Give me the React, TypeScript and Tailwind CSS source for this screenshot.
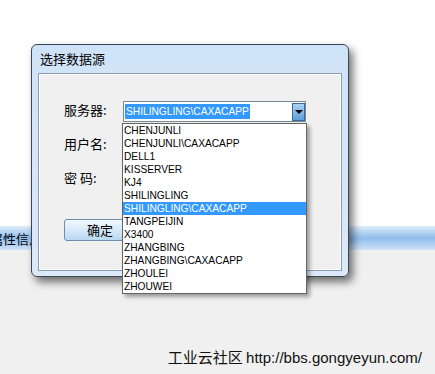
import React from 'react';

const servers = [
  'CHENJUNLI',
  'CHENJUNLI\\CAXACAPP',
  'DELL1',
  'KISSERVER',
  'KJ4',
  'SHILINGLING',
  'SHILINGLING\\CAXACAPP',
  'TANGPEIJIN',
  'X3400',
  'ZHANGBING',
  'ZHANGBING\\CAXACAPP',
  'ZHOULEI',
  'ZHOUWEI',
];

const selected = 'SHILINGLING\\CAXACAPP';

const cjk = { fontFamily: '"Noto Sans CJK SC", sans-serif' };
const latin = { fontFamily: '"Liberation Sans", Arial, sans-serif' };

export default function App() {
  return (
    <div className="relative w-[435px] h-[374px] overflow-hidden bg-[#f0f0f0]" style={latin}>
      {/* desktop behind the dialog */}
      <div className="h-[226px] bg-white" />
      <div className="h-[24px] bg-gradient-to-b from-[#dfeefc] via-[#8fbdec] to-[#cfe2f7] flex items-center">
        <span className="ml-[-10px] text-[13px] leading-[15px] whitespace-nowrap text-black" style={cjk}>属性信息</span>
      </div>
      <div className="flex justify-end pr-[13px] pt-[96px]">
        <span className="text-[15px] text-[#111]" style={cjk}>
          工业云社区 <span style={latin}>http://bbs.gongyeyun.com/</span>
        </span>
      </div>

      {/* dialog window */}
      <div className="absolute left-[31px] top-[44px] w-[318px] h-[233px] rounded-[6px] border border-[#3d4650] bg-gradient-to-b from-[#cfe3f8] to-[#dbe9f8] shadow-[4px_5px_9px_rgba(0,0,0,0.55)] flex flex-col px-[6px] pb-[5px]">
        <div className="h-[28px] flex items-center pl-[2px] text-[13px] text-black" style={cjk}>
          选择数据源
        </div>
        <div className="flex-1 border border-[#8a9db5] bg-[#f0f0f0] shadow-[inset_0_0_0_1px_#ffffff] pl-[25px] pt-[26px]">
          <div className="flex flex-col gap-[14px] text-[13px] text-black" style={cjk}>
            <div className="h-[20px] flex items-center">服务器:</div>
            <div className="h-[20px] flex items-center">用户名:</div>
            <div className="h-[20px] flex items-center">密&nbsp;码:</div>
          </div>
          <div className="mt-[31px] w-[72px] h-[22px] rounded-[3px] border border-[#6f8cae] bg-gradient-to-b from-[#f2f8fe] via-[#d7e9f9] to-[#b9d8f3] flex items-center justify-center text-[13px] text-black" style={cjk}>
            确定
          </div>
        </div>
      </div>

      {/* combo box */}
      <div className="absolute left-[123px] top-[101px] w-[183px] h-[21px] border border-[#7a8794] bg-white flex items-center pl-[1px]">
        <span className="flex-1 text-[10.2px] leading-[15px] whitespace-nowrap">
          <span className="inline-block bg-[#3399ff] text-white px-[1px]">{selected}</span>
        </span>
        <div className="w-[13px] h-[18px] border border-[#3d6a99] bg-gradient-to-b from-[#a9d3f5] to-[#5d9fd9] flex items-center justify-center">
          <div className="w-0 h-0 border-l-[4px] border-r-[4px] border-t-[4px] border-l-transparent border-r-transparent border-t-black" />
        </div>
      </div>

      {/* open drop-down list */}
      <div className="absolute left-[122px] top-[123px] w-[185px] border border-[#646464] bg-white shadow-[3px_3px_4px_rgba(0,0,0,0.35)]">
        {servers.map((s) => (
          <div
            key={s}
            className={`h-[13px] leading-[13px] text-[10.2px] pl-[1px] whitespace-nowrap ${s === selected ? 'bg-[#3399ff] text-white' : 'text-black'}`}
          >
            {s}
          </div>
        ))}
      </div>
    </div>
  );
}
